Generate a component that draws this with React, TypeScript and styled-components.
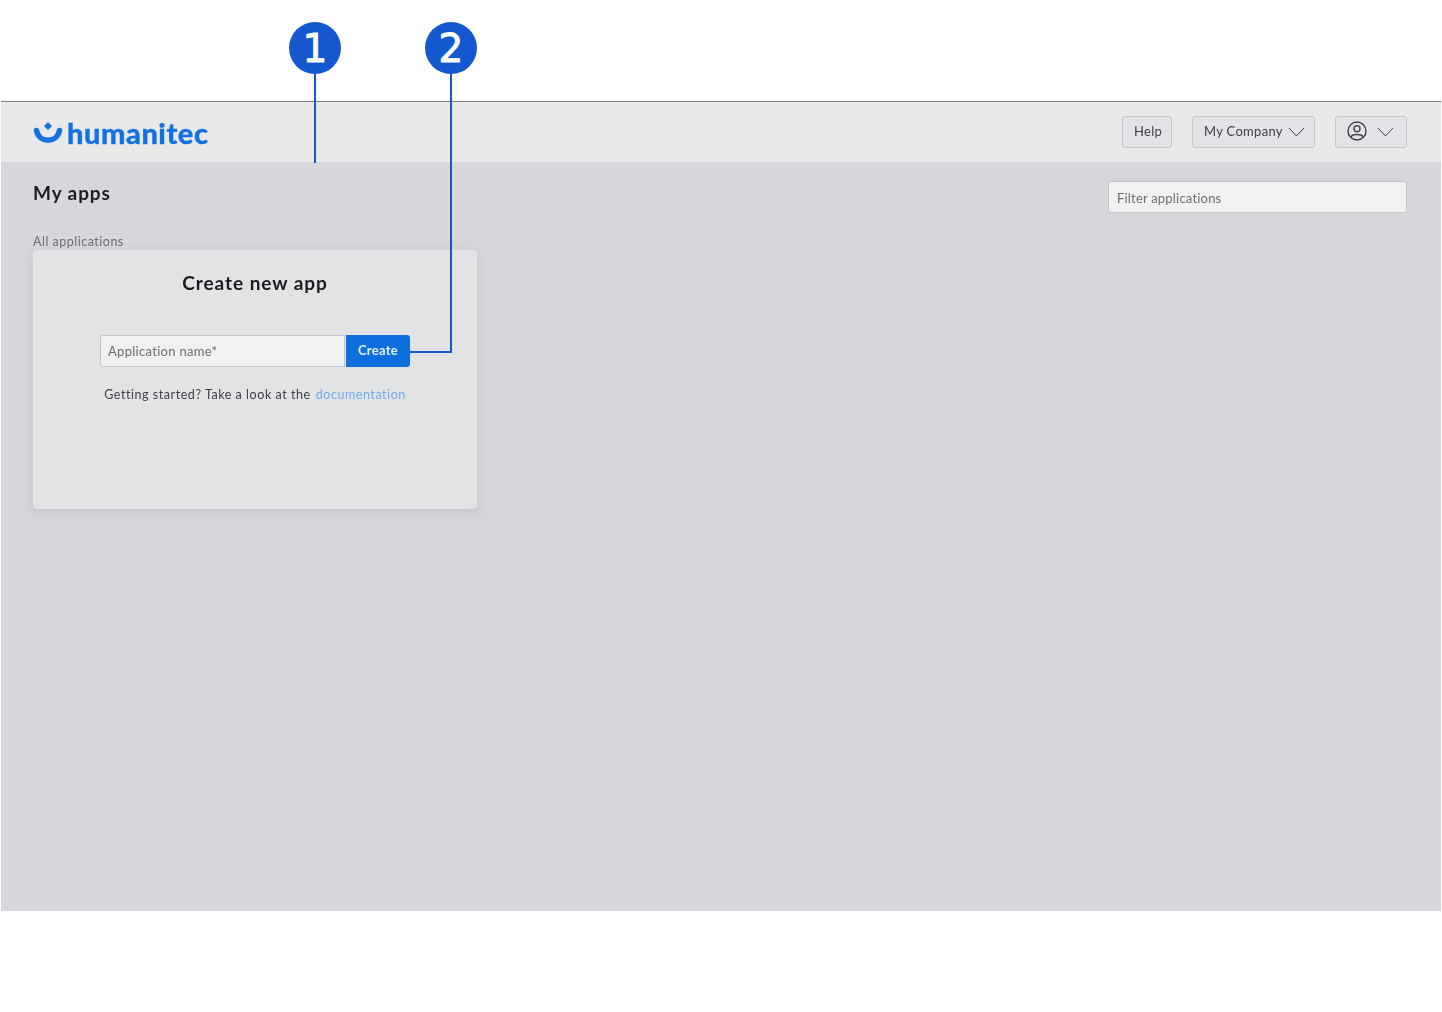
import React from "react";
import styled, { createGlobalStyle } from "styled-components";

const font = `"Lato", "Open Sans", sans-serif`;

const GlobalStyle = createGlobalStyle`
  html, body {
    margin: 0;
    padding: 0;
    background: #ffffff;
    font-family: ${font};
  }
  * {
    box-sizing: border-box;
  }
`;

const Page = styled.div`
  position: relative;
  width: 1442px;
  height: 1012px;
  padding: 101px 1px 101px 1px;
  overflow: hidden;
`;

const Frame = styled.div`
  display: flex;
  flex-direction: column;
  height: 810px;
  border-top: 1px solid #7f7f7f;
  background: #d6d7db;
`;

const Header = styled.header`
  display: flex;
  align-items: center;
  justify-content: space-between;
  flex: none;
  height: 60px;
  padding: 0 34px 0 32px;
  background: #e9e9ea;
`;

const Logo = styled.div`
  display: flex;
  align-items: center;
  gap: 4px;
  color: #1472e0;
  filter: blur(0.3px);
`;

const LogoText = styled.span`
  padding-top: 2px;
  font-size: 29px;
  font-weight: 900;
  line-height: 30px;
  letter-spacing: 0.55px;
  -webkit-text-stroke: 0.3px #1472e0;
`;

const HeaderActions = styled.div`
  display: flex;
  gap: 20px;
`;

const HeaderButton = styled.button<{ $width: number; $gap?: number }>`
  display: flex;
  align-items: center;
  gap: ${(p) => p.$gap ?? 5}px;
  width: ${(p) => p.$width}px;
  height: 32px;
  padding: 0 0 2px 11px;
  border: 1px solid #c3c5ca;
  border-radius: 3px;
  background: #e2e3e6;
  color: #3f4146;
  font-family: ${font};
  font-size: 13px;
  letter-spacing: 0.3px;
  filter: blur(0.25px);
`;

const ChevronIcon = styled.svg`
  margin-top: 2px;
`;

const Main = styled.main`
  flex: 1;
  padding: 19px 34px 0 32px;
`;

const TitleRow = styled.div`
  display: flex;
  align-items: flex-start;
  justify-content: space-between;
`;

const Title = styled.h1`
  margin: 1px 0 0;
  color: #1b1c1f;
  font-size: 19px;
  font-weight: 700;
  line-height: 22px;
  letter-spacing: 0.9px;
  filter: blur(0.25px);
`;

const TextInput = styled.div<{ $width: number }>`
  display: flex;
  align-items: center;
  width: ${(p) => p.$width}px;
  height: 32px;
  padding: 1px 8px 0;
  border: 1px solid #c3c5ca;
  border-radius: 3px;
  background: #f1f1f2;
  color: #6b6d72;
  font-size: 13px;
  letter-spacing: 0.2px;
  filter: blur(0.2px);
`;

const SectionLabel = styled.div`
  margin-top: 21px;
  color: #6b6d72;
  font-size: 12.5px;
  line-height: 16px;
  letter-spacing: 0.5px;
  filter: blur(0.2px);
`;

const Card = styled.section`
  display: flex;
  flex-direction: column;
  align-items: center;
  width: 444px;
  height: 259px;
  padding-top: 22px;
  border-radius: 4px;
  background: #e2e3e5;
  box-shadow: 0 3px 8px rgba(120, 122, 135, 0.22);
`;

const CardTitle = styled.h2`
  margin: 0;
  color: #1b1c1f;
  font-size: 19px;
  font-weight: 700;
  line-height: 22px;
  letter-spacing: 0.95px;
  filter: blur(0.25px);
`;

const CreateRow = styled.div`
  display: flex;
  gap: 1px;
  margin-top: 41px;
`;

const CreateInput = styled(TextInput)`
  padding: 0 8px 0 7px;
  border-radius: 3px 0 0 3px;
  letter-spacing: 0.3px;
`;

const CreateButton = styled.button`
  width: 64px;
  height: 32px;
  padding: 0 0 2px;
  border: none;
  border-radius: 0 3px 3px 0;
  background: #0c6fdd;
  color: #e6effa;
  font-family: ${font};
  font-size: 13px;
  font-weight: 700;
  letter-spacing: 0.3px;
  filter: blur(0.2px);
`;

const HelpText = styled.p`
  margin: 20px 0 0;
  color: #3f4146;
  font-size: 12.5px;
  line-height: 16px;
  letter-spacing: 0.55px;
  filter: blur(0.2px);
`;

const DocLink = styled.a`
  margin-left: 5px;
  color: #6fa9f0;
`;

const CalloutBadge = styled.div<{ $left: number }>`
  position: absolute;
  top: 22px;
  left: ${(p) => p.$left}px;
  display: flex;
  align-items: center;
  justify-content: center;
  width: 52px;
  height: 52px;
  padding-top: 1px;
  border-radius: 50%;
  background: #1358cf;
  color: #ffffff;
  font-family: "DejaVu Sans", sans-serif;
  font-size: 39px;
  line-height: 52px;
  -webkit-text-stroke: 0.9px #ffffff;
`;

const CalloutStem = styled.div<{ $left: number; $height: number }>`
  position: absolute;
  top: 74px;
  left: ${(p) => p.$left}px;
  width: 2px;
  height: ${(p) => p.$height}px;
  background: #1358cf;
`;

const CalloutArm = styled.div`
  position: absolute;
  top: 351px;
  left: 410px;
  width: 42px;
  height: 2px;
  background: #1358cf;
`;

const LogoMark = () => (
  <svg width="30" height="24" viewBox="0 0 30 24" fill="none">
    <path d="M3.5 10.5 C6 23.5 24 23.5 26.5 10.5" stroke="currentColor" strokeWidth="5.5" strokeLinecap="round" />
    <path d="M15 2 L19 6 L15 10 L11 6 Z" fill="currentColor" />
  </svg>
);

const UserIcon = () => (
  <svg width="20" height="20" viewBox="0 0 20 20" fill="none" stroke="#3f4146" strokeWidth="1.4">
    <circle cx="10" cy="10" r="9" />
    <circle cx="10" cy="7.8" r="3" />
    <path d="M4 16 C 4.8 12.6, 15.2 12.6, 16 16" />
  </svg>
);

const Chevron = () => (
  <ChevronIcon width="17" height="10" viewBox="0 0 17 10" fill="none" stroke="#3f4146" strokeWidth="1">
    <path d="M1 1 L8.5 9 L16 1" />
  </ChevronIcon>
);

export default function App() {
  return (
    <Page>
      <GlobalStyle />
      <Frame>
        <Header>
          <Logo>
            <LogoMark />
            <LogoText>humanitec</LogoText>
          </Logo>
          <HeaderActions>
            <HeaderButton $width={50}>Help</HeaderButton>
            <HeaderButton $width={123}>
              My Company
              <Chevron />
            </HeaderButton>
            <HeaderButton $width={72} $gap={10}>
              <UserIcon />
              <Chevron />
            </HeaderButton>
          </HeaderActions>
        </Header>
        <Main>
          <TitleRow>
            <Title>My apps</Title>
            <TextInput $width={299}>Filter applications</TextInput>
          </TitleRow>
          <SectionLabel>All applications</SectionLabel>
          <Card>
            <CardTitle>Create new app</CardTitle>
            <CreateRow>
              <CreateInput $width={245}>Application name*</CreateInput>
              <CreateButton>Create</CreateButton>
            </CreateRow>
            <HelpText>
              Getting started? Take a look at the
              <DocLink>documentation</DocLink>
            </HelpText>
          </Card>
        </Main>
      </Frame>
      <CalloutStem $left={314} $height={89} />
      <CalloutStem $left={450} $height={279} />
      <CalloutArm />
      <CalloutBadge $left={289}>1</CalloutBadge>
      <CalloutBadge $left={425}>2</CalloutBadge>
    </Page>
  );
}
